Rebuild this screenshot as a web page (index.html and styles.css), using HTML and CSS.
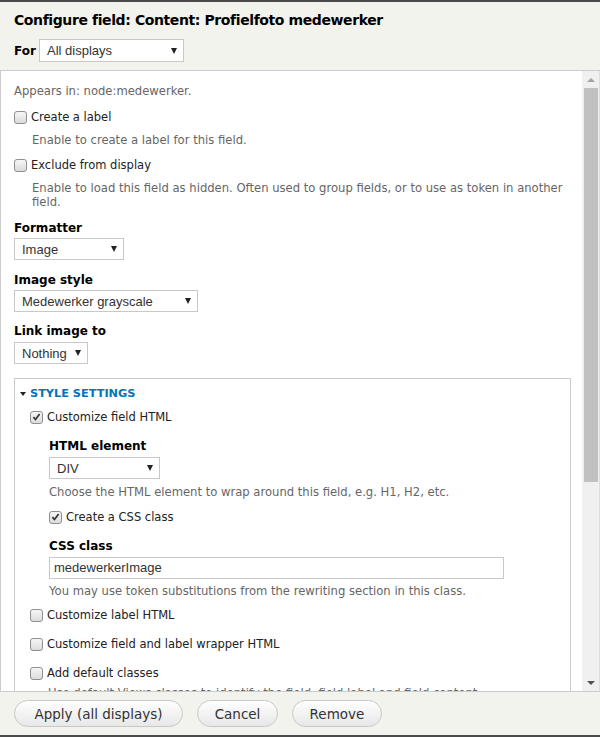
FILE: index.html
```html
<!DOCTYPE html>
<html>
<head>
<meta charset="utf-8">
<link rel="stylesheet" href="styles.css">
</head>
<body>
<div class="dialog">
  <div class="header">
    <h1 class="title">Configure field: Content: Profielfoto medewerker</h1>
    <div class="for-row">
      <span class="for-label">For</span>
      <div class="select select-for"><span>All displays</span><i class="arrow"></i></div>
    </div>
  </div>
  <div class="body">
    <div class="content">
      <div class="appears">Appears in: node:medewerker.</div>

      <div class="check-row r-create"><span class="cb"></span><span class="cb-label">Create a label</span></div>
      <div class="desc d-create">Enable to create a label for this field.</div>

      <div class="check-row r-exclude"><span class="cb"></span><span class="cb-label">Exclude from display</span></div>
      <div class="desc d-exclude">Enable to load this field as hidden. Often used to group fields, or to use as token in another field.</div>

      <div class="field-label l-formatter">Formatter</div>
      <div class="select select-formatter"><span>Image</span><i class="arrow"></i></div>

      <div class="field-label l-style">Image style</div>
      <div class="select select-style"><span>Medewerker grayscale</span><i class="arrow"></i></div>

      <div class="field-label l-link">Link image to</div>
      <div class="select select-link"><span>Nothing</span><i class="arrow"></i></div>

      <div class="fieldset">
        <div class="legend"><i class="tri"></i>STYLE SETTINGS</div>

        <div class="check-row r-cfh"><span class="cb checked"><svg viewBox="0 0 12 12" width="12" height="12"><path d="M2.6 6.2 L4.9 8.7 L9.4 2.8" fill="none" stroke="#333" stroke-width="1.9"/></svg></span><span class="cb-label">Customize field HTML</span></div>

        <div class="nested">
          <div class="field-label l-html">HTML element</div>
          <div class="select select-div"><span>DIV</span><i class="arrow"></i></div>
          <div class="desc d-html">Choose the HTML element to wrap around this field, e.g. H1, H2, etc.</div>

          <div class="check-row r-css"><span class="cb checked"><svg viewBox="0 0 12 12" width="12" height="12"><path d="M2.6 6.2 L4.9 8.7 L9.4 2.8" fill="none" stroke="#333" stroke-width="1.9"/></svg></span><span class="cb-label">Create a CSS class</span></div>

          <div class="field-label l-css">CSS class</div>
          <div class="text-input">medewerkerImage</div>
          <div class="desc d-css">You may use token substitutions from the rewriting section in this class.</div>
        </div>

        <div class="check-row r-clh"><span class="cb"></span><span class="cb-label">Customize label HTML</span></div>
        <div class="check-row r-cflw"><span class="cb"></span><span class="cb-label">Customize field and label wrapper HTML</span></div>
        <div class="check-row r-adc"><span class="cb"></span><span class="cb-label">Add default classes</span></div>
        <div class="desc d-adc">Use default Views classes to identify the field, field label and field content.</div>
      </div>
    </div>
    <div class="scrollbar">
      <div class="sb-btn"><i class="sb-up"></i></div>
      <div class="sb-track"><div class="sb-thumb"></div></div>
      <div class="sb-btn sb-btn-down"><i class="sb-down"></i></div>
    </div>
  </div>
  <div class="footer">
    <button class="btn btn-apply">Apply (all displays)</button>
    <button class="btn btn-cancel">Cancel</button>
    <button class="btn btn-remove">Remove</button>
  </div>
</div>
</body>
</html>
```

FILE: styles.css
```css
* { box-sizing: border-box; }
html, body { margin: 0; padding: 0; }
body {
  width: 600px;
  height: 737px;
  overflow: hidden;
  background: #fff;
  font-family: "DejaVu Sans", sans-serif;
  color: #222;
}
.dialog {
  height: 737px;
  display: flex;
  flex-direction: column;
  border-top: 2px solid #4a4a4a;
  border-bottom: 2px solid #4a4a4a;
}
.header {
  height: 69px;
  background: #f3f3ee;
  border-bottom: 1px solid #ccc;
  padding: 9px 14px 0 14px;
}
.title {
  margin: 0;
  font-size: 14px;
  line-height: 18px;
  font-weight: bold;
  letter-spacing: -0.4px;
  color: #000;
}
.for-row {
  display: flex;
  align-items: center;
  margin-top: 10px;
}
.for-label {
  font-size: 12px;
  font-weight: bold;
  color: #000;
  width: 25px;
}
.select {
  display: flex;
  align-items: center;
  justify-content: space-between;
  height: 22px;
  background: #fff;
  border: 1px solid #c8c8c8;
  font-family: "Liberation Sans", Arial, sans-serif;
  font-size: 13px;
  color: #333;
  padding: 0 6px 0 7px;
}
.arrow {
  width: 0; height: 0;
  border-left: 3.5px solid transparent;
  border-right: 3.5px solid transparent;
  border-top: 6px solid #222;
}
.select-for { width: 145px; height: 23px; }
.body {
  flex: 1;
  display: flex;
  border-left: 1px solid #ccc;
  overflow: hidden;
}
.content {
  flex: 1;
  overflow: hidden;
  padding: 11px 0 0 13px;
}
.appears { font-size: 11.6px; line-height: 18px; color: #666; }
.check-row {
  display: flex;
  align-items: center;
  height: 18px;
  font-size: 11.5px;
}
.cb {
  width: 13px; height: 13px;
  border: 1px solid #8f8f8f;
  border-radius: 3px;
  background: linear-gradient(#f6f6f6, #dcdcdc);
  margin-right: 4px;
  display: flex;
  align-items: center;
  justify-content: center;
}
.cb svg { display: block; }
.cb-label { color: #222; }
.desc {
  font-size: 11.6px;
  line-height: 14px;
  color: #666;
  padding-left: 18px;
}
.field-label {
  font-size: 12px;
  line-height: 18px;
  font-weight: bold;
  color: #000;
}
.r-create { margin-top: 8px; }
.d-create { margin-top: 7px; }
.r-exclude { margin-top: 9px; }
.d-exclude { margin-top: 7px; padding-right: 10px; }
.l-formatter { margin-top: 10px; }
.select-formatter { margin-top: 1px; width: 110px; }
.l-style { margin-top: 11px; }
.select-style { margin-top: 1px; width: 184px; }
.l-link { margin-top: 10px; }
.select-link { margin-top: 2px; width: 74px; }
.fieldset {
  margin-top: 14px;
  width: 557px;
  border: 1px solid #ccc;
  padding: 6px 0 0 15px;
  height: 400px;
}
.legend {
  display: flex;
  align-items: center;
  margin-left: -10px;
  font-size: 11.3px;
  line-height: 18px;
  font-weight: bold;
  color: #0074bd;
}
.tri {
  width: 0; height: 0;
  border-left: 3px solid transparent;
  border-right: 3px solid transparent;
  border-top: 4px solid #222;
  margin-right: 4px;
}
.r-cfh { margin-top: 5px; }
.nested { padding-left: 19px; }
.l-html { margin-top: 11px; }
.select-div { margin-top: 2px; width: 111px; }
.nested .desc { padding-left: 0; }
.d-html { margin-top: 6px; }
.r-css { margin-top: 9px; }
.l-css { margin-top: 11px; }
.text-input {
  margin-top: 2px;
  width: 455px;
  height: 22px;
  border: 1px solid #c8c8c8;
  font-family: "Liberation Sans", Arial, sans-serif;
  font-size: 13px;
  line-height: 20px;
  color: #333;
  padding-left: 4px;
}
.d-css { margin-top: 5px; }
.r-clh { margin-top: 8px; }
.r-cflw { margin-top: 11px; }
.r-adc { margin-top: 11px; }
.d-adc { margin-top: 4px; }
.scrollbar {
  width: 18px;
  display: flex;
  flex-direction: column;
  background: #f0f0f0;
  border-right: 1px solid #ddd;
}
.sb-btn {
  height: 17px;
  display: flex;
  align-items: center;
  justify-content: center;
}
.sb-up {
  width: 0; height: 0;
  border-left: 4px solid transparent;
  border-right: 4px solid transparent;
  border-bottom: 4px solid #a3a3a3;
}
.sb-down {
  width: 0; height: 0;
  border-left: 4px solid transparent;
  border-right: 4px solid transparent;
  border-top: 4px solid #505050;
}
.sb-track { flex: 1; padding: 0 1px 0 2px; }
.sb-thumb { height: 394px; background: #c1c1c1; }
.footer {
  height: 44px;
  background: #f3f3ee;
  border-top: 1px solid #ccc;
  display: flex;
  align-items: center;
  padding: 0 0 0 14px;
  gap: 14px;
}
.btn {
  height: 27px;
  border: 1px solid #c8c8c8;
  border-radius: 14px;
  background: linear-gradient(#fefefe, #e8e8e8);
  font-family: "DejaVu Sans", sans-serif;
  font-size: 13.5px;
  color: #333;
  padding: 0 10px;
}
.btn-apply { width: 169px; }
.btn-cancel { width: 81px; }
.btn-remove { width: 90px; }
```
